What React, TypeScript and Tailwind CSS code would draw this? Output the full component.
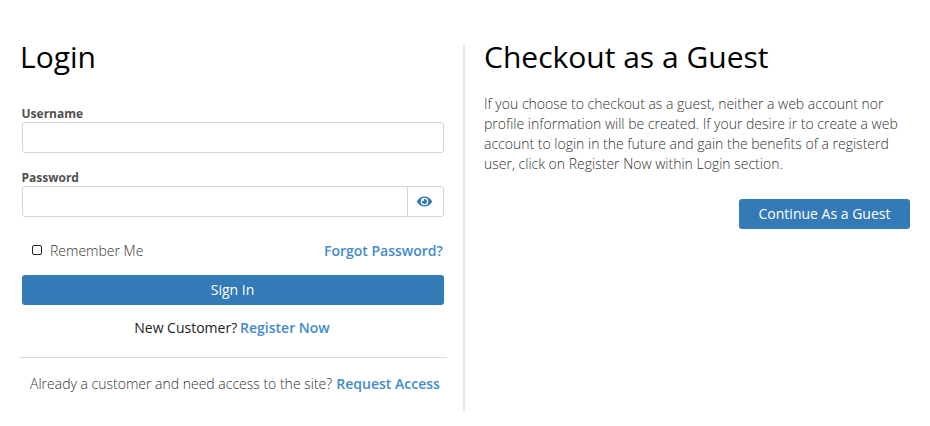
import React from "react";
import { FaEye } from "react-icons/fa";

const linkClass = "font-semibold text-[#428bca]";

function Login() {
  return (
    <section className="w-[427px] shrink-0">
      <h1 className="pt-[6px] text-[30px] leading-[40px] text-black">Login</h1>
      <form className="ml-[1.5px] w-[422px] pt-[29px]">
        <label className="block h-[16px] text-[12px] leading-[16px] font-bold text-[#505050]">Username</label>
        <input className="block h-[31px] w-full rounded-[3px] border border-[#d6d6d6]" />
        <label className="mt-[17px] block h-[16px] text-[12px] leading-[16px] font-bold text-[#505050]">Password</label>
        <div className="flex h-[31px] rounded-[3px] border border-[#d6d6d6]">
          <input className="min-w-0 flex-1" />
          <button type="button" className="flex w-[36px] items-center justify-center border-l border-[#d6d6d6] pr-px text-[#337ab7]">
            <FaEye size={15} />
          </button>
        </div>
        <div className="mt-[23px] flex h-[20px] items-center justify-between pr-[0.6px] text-[14px]">
          <label className="flex items-center pl-[10.5px] font-light text-[#333]">
            <span className="mr-[8px] h-[10px] w-[10px] rounded-[2px] border border-[#222]" />
            Remember Me
          </label>
          <a className={linkClass}>Forgot Password?</a>
        </div>
        <button type="button" className="mt-[15px] block h-[30px] w-full rounded-[3px] bg-[#337ab7] pb-[2px] text-[14px] text-white">Sign In</button>
        <p className="mt-[13px] -ml-[1px] text-center text-[14px] leading-[20px] text-[#222]">
          New Customer? <a className={`${linkClass} -ml-[0.8px]`}>Register Now</a>
        </p>
      </form>
      <hr className="mt-[19px] border-[#d9d9d9]" />
      <p className="mt-[16px] pl-[10px] text-[14px] leading-[20px] font-light whitespace-nowrap text-[#333]">
        Already a customer and need access to the site? <a className={`${linkClass} ml-[0.5px]`}>Request Access</a>
      </p>
    </section>
  );
}

function Guest() {
  return (
    <section className="w-[426px]">
      <h1 className="pt-[6px] text-[30px] leading-[40px] text-black">Checkout as a Guest</h1>
      <p className="mt-[17px] text-[14px] leading-[20px] font-light whitespace-nowrap text-[#333]">
        If you choose to checkout as a guest, neither a web account nor<br />
        profile information will be created. If your desire ir to create a web<br />
        account to login in the future and gain the benefits of a registerd<br />
        user, click on Register Now within Login section.
      </p>
      <button type="button" className="mt-[25px] ml-auto block h-[30px] w-[171px] rounded-[3px] bg-[#337ab7] pb-[2px] text-[14px] text-white">
        Continue As a Guest
      </button>
    </section>
  );
}

export default function App() {
  return (
    <main className="flex h-[426px] w-[930px] bg-white pl-[20px] font-['Open_Sans',sans-serif]">
      <div className="flex h-full pt-[31px]"><Login /></div>
      <div className="mt-[44px] mr-[19px] ml-[16px] h-[368px] w-[2px] bg-[#e6e6e6]" />
      <div className="pt-[31px]"><Guest /></div>
    </main>
  );
}
